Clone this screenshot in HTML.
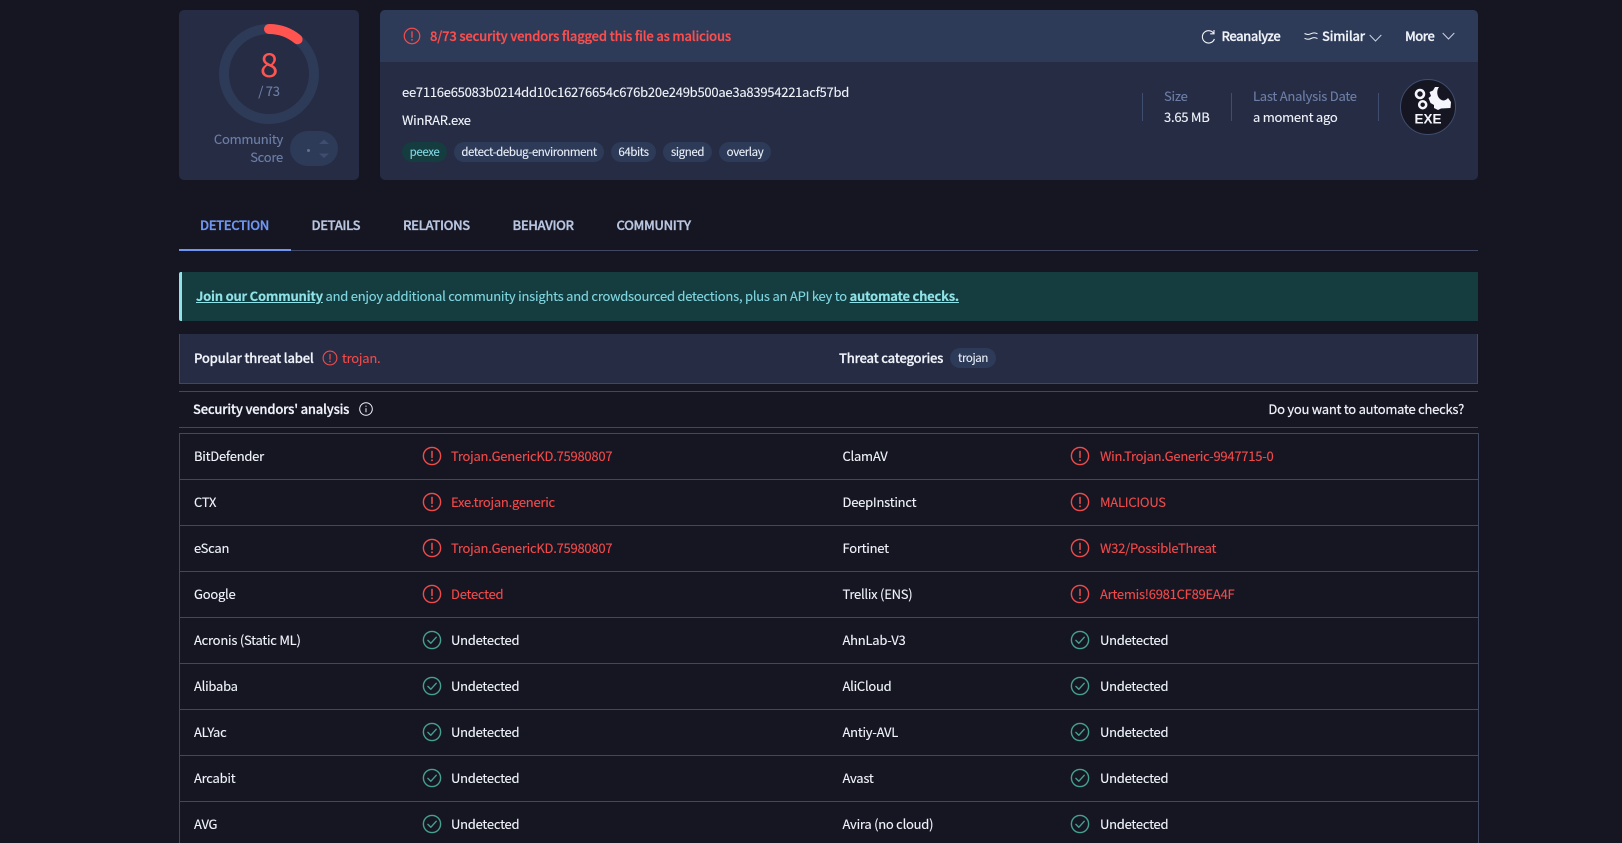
<!DOCTYPE html>
<html lang="en">
<head>
<meta charset="utf-8">
<title>VirusTotal - File</title>
<style>
*{box-sizing:border-box;margin:0;padding:0}
html,body{width:1622px;height:843px;overflow:hidden;background:#161623}
body{position:relative;font-family:"Noto Sans CJK JP","Liberation Sans",sans-serif;font-size:13px;letter-spacing:-.25px;color:#f0f3fa;-webkit-text-stroke:.12px currentColor}
.a{position:absolute}
.t{position:absolute;white-space:nowrap;line-height:20px;transform:translateY(-10px)}
.b{font-weight:500;letter-spacing:-.2px;-webkit-text-stroke:.25px currentColor}
.red{color:#f04a4a}
.lab{color:#6d7fa8}
.tag{position:absolute;top:142px;height:20px;border-radius:10px;background:#2d3b58;font-size:11.5px;letter-spacing:-.4px;line-height:20px;text-align:center;color:#e9eef8;white-space:nowrap}
.hl{position:absolute;background:#3f4763;height:1px}
.r{position:absolute;left:179px;width:1300px;height:46px;border-bottom:1px solid #3f4763}
.r span{position:absolute;top:12px;line-height:20px;white-space:nowrap}
.r svg{position:absolute;top:12px;width:20px;height:20px}
.n1{left:15px}.i1{left:243px}.v1{left:272px}
.n2{left:663.500px}.i2{left:891px}.v2{left:921px}
.tab{position:absolute;top:215px;font-size:13px;letter-spacing:-.35px;font-weight:500;-webkit-text-stroke:.35px currentColor;line-height:20px;color:#b9c6e0;white-space:nowrap}
svg{display:block;overflow:visible}
</style>
</head>
<body>
<svg width="0" height="0" style="position:absolute">
<symbol id="al" viewBox="0 0 20 20"><circle cx="10" cy="10" r="8.600" fill="none" stroke="#ef4b4b" stroke-width="1.400"/><path d="M10 5.400v6" stroke="#ef4b4b" stroke-width="1.500" stroke-linecap="round"/><circle cx="10" cy="14.300" r=".95" fill="#ef4b4b"/></symbol>
<symbol id="ok" viewBox="0 0 20 20"><circle cx="10" cy="10" r="8.600" fill="none" stroke="#45a08f" stroke-width="1.400"/><path d="M5.900 10.400l2.900 2.900 5.400-6" fill="none" stroke="#45a08f" stroke-width="1.400" stroke-linecap="round" stroke-linejoin="round"/></symbol>
</svg>

<!-- score card -->
<div class="a" style="left:179px;top:10px;width:180px;height:170px;background:#252c43;border-radius:5px"></div>
<svg class="a" style="left:209px;top:14px" width="120" height="120" viewBox="0 0 120 120">
<circle cx="60" cy="60" r="45" fill="none" stroke="#2d3b58" stroke-width="10"/>
<path d="M60 15A45 45 0 0 1 88.600 25.300" fill="none" stroke="#ff544f" stroke-width="10" stroke-linecap="round"/>
</svg>
<div class="t" style="left:229px;width:80px;text-align:center;top:63px;font-size:33px;line-height:40px;transform:translateY(-20px);color:#ff544f;font-weight:400;-webkit-text-stroke:0">8</div>
<div class="t lab" style="left:229px;width:80px;text-align:center;top:91px">/ 73</div>
<div class="t lab" style="left:183px;width:100px;text-align:right;top:139px">Community</div>
<div class="t lab" style="left:183px;width:100px;text-align:right;top:157px">Score</div>
<div class="a" style="left:290px;top:131px;width:48px;height:35px;border-radius:18px;background:#2d3b58"></div>
<div class="a" style="left:307px;top:149px;width:3px;height:3px;border-radius:2px;background:#5f6f95"></div>
<svg class="a" style="left:318px;top:139px" width="12" height="20" viewBox="0 0 12 20"><path d="M1 5L6 0.500 11 5zM1 14.500h10L6 19z" fill="#3f4e70"/></svg>

<!-- main card -->
<div class="a" style="left:380px;top:10px;width:1098px;height:170px;background:#252c43;border-radius:5px"></div>
<div class="a" style="left:380px;top:10px;width:1098px;height:52px;background:#2d3b58;border-radius:5px 5px 0 0"></div>
<svg class="a" style="left:403px;top:27px;width:18px;height:18px"><use href="#al"/></svg>
<div class="t b" style="left:430px;top:36px;letter-spacing:-.18px;color:#fb4f4f">8/73 security vendors flagged this file as malicious</div>

<svg class="a" style="left:1201px;top:29px" width="15" height="16" viewBox="0 0 15 16" fill="none" stroke="#f0f3fa" stroke-width="1.100"><path d="M12.600 4.200A6.200 6.200 0 1 0 13.400 10"/><path d="M13 1v3.800H9.200"/></svg>
<div class="t b" style="left:1221.500px;top:36px;letter-spacing:-.45px">Reanalyze</div>
<svg class="a" style="left:1304px;top:31px" width="14" height="10" viewBox="0 0 14 10" fill="none" stroke="#f0f3fa" stroke-width="1"><path d="M.5 2.500C3 3.800 5 3.800 7 2.700S11 1.400 13.500 2.800"/><path d="M.5 7.300C3 8.600 5 8.600 7 7.500S11 6.200 13.500 7.600"/></svg>
<div class="t b" style="left:1322px;top:36px">Similar</div>
<svg class="a" style="left:1369px;top:34px" width="13" height="8" viewBox="0 0 13 8" fill="none" stroke="#c9d2e6" stroke-width="1"><path d="M.7 1l5.800 6 5.800-6"/></svg>
<div class="t b" style="left:1405px;top:36px;letter-spacing:-.5px">More</div>
<svg class="a" style="left:1442px;top:32px" width="13" height="8" viewBox="0 0 13 8" fill="none" stroke="#c9d2e6" stroke-width="1"><path d="M.7 1l5.800 6 5.800-6"/></svg>

<div class="t" style="left:402px;top:92px">ee7116e65083b0214dd10c16276654c676b20e249b500ae3a83954221acf57bd</div>
<div class="t" style="left:402px;top:120px">WinRAR.exe</div>
<div class="tag" style="left:402px;width:45px;background:#153c3f;color:#7fd6e0">peexe</div>
<div class="tag" style="left:454px;width:150px">detect-debug-environment</div>
<div class="tag" style="left:611px;width:45px">64bits</div>
<div class="tag" style="left:663px;width:49px">signed</div>
<div class="tag" style="left:719px;width:52px">overlay</div>

<div class="a" style="left:1142px;top:93px;width:1px;height:28px;background:#3f4d6e"></div>
<div class="a" style="left:1231px;top:93px;width:1px;height:28px;background:#3f4d6e"></div>
<div class="a" style="left:1378px;top:93px;width:1px;height:28px;background:#3f4d6e"></div>
<div class="t lab" style="left:1164px;top:96px">Size</div>
<div class="t" style="left:1164px;top:117px">3.65 MB</div>
<div class="t lab" style="left:1253px;top:96px">Last Analysis Date</div>
<div class="t" style="left:1253px;top:117px">a moment ago</div>

<svg class="a" style="left:1400px;top:79px" width="56" height="56" viewBox="0 0 56 56">
<circle cx="28" cy="28" r="27.500" fill="#161623" stroke="#3f4d6e"/>
<circle cx="20" cy="15" r="4" fill="none" stroke="#f4f6fb" stroke-width="2.600"/>
<circle cx="22.700" cy="25.700" r="3.500" fill="none" stroke="#f4f6fb" stroke-width="2.500"/>
<path d="M35 8L39 8C36.500 11 36.500 17 40 20C43 22.500 46 21.500 48 19L51 23L50.500 29L41 29.500L38 31L34 29L34 26L30.500 24L28.500 19L31 17L29.500 13L33 11.500Z" fill="#f4f6fb"/>
<text x="28" y="44.500" text-anchor="middle" font-family="'Liberation Sans',sans-serif" font-weight="700" font-size="13.500" letter-spacing="0" fill="#f4f6fb">EXE</text>
</svg>

<!-- tabs -->
<div class="tab" style="left:200px;color:#6f96f2">DETECTION</div>
<div class="tab" style="left:311.500px">DETAILS</div>
<div class="tab" style="left:403px">RELATIONS</div>
<div class="tab" style="left:512.500px">BEHAVIOR</div>
<div class="tab" style="left:616.500px">COMMUNITY</div>
<div class="hl" style="left:179px;top:250px;width:1299px"></div>
<div class="a" style="left:179px;top:249px;width:112px;height:2px;background:#6f96f2"></div>

<!-- banner -->
<div class="a" style="left:179px;top:272px;width:1299px;height:49px;background:#153c3f;border-left:3px solid #8fe3e8;border-radius:2px 0 0 2px"></div>
<div class="t" style="left:196px;top:296px;letter-spacing:-.235px;color:#7fd6e0"><b style="font-weight:700;text-decoration:underline;color:#8fe3e8">Join our Community</b> and enjoy additional community insights and crowdsourced detections, plus an API key to <b style="font-weight:700;text-decoration:underline;color:#8fe3e8">automate checks.</b></div>

<!-- threat -->
<div class="a" style="left:179px;top:334px;width:1299px;height:50px;background:#252c43;border:1px solid #3f4763;border-top:0"></div>
<div class="t b" style="left:194px;top:358px">Popular threat label</div>
<svg class="a" style="left:322px;top:350px;width:16px;height:16px"><use href="#al"/></svg>
<div class="t red" style="left:342px;top:358px">trojan.</div>
<div class="t b" style="left:839px;top:358px">Threat categories</div>
<div class="tag" style="left:950px;top:348px;width:46px">trojan</div>

<!-- vendors head -->
<div class="hl" style="left:179px;top:391px;width:1299px"></div>
<div class="t b" style="left:193px;top:409px">Security vendors' analysis</div>
<svg class="a" style="left:359px;top:402px" width="14" height="14" viewBox="0 0 14 14" fill="none" stroke="#f0f3fa" stroke-width="1"><circle cx="7" cy="7" r="6.300"/><path d="M7 6.200v4"/><path d="M7 3.600v1.100"/></svg>
<div class="t" style="right:158px;top:409px;-webkit-text-stroke:.2px currentColor">Do you want to automate checks?</div>
<div class="hl" style="left:179px;top:427px;width:1299px"></div>

<!-- table frame -->
<div class="a" style="left:179px;top:433px;width:1300px;height:420px;border:1px solid #3f4763"></div>

<div class="r" style="top:434px"><span class="n1">BitDefender</span><svg class="i1"><use href="#al"/></svg><span class="v1 red">Trojan.GenericKD.75980807</span><span class="n2">ClamAV</span><svg class="i2"><use href="#al"/></svg><span class="v2 red">Win.Trojan.Generic-9947715-0</span></div>
<div class="r" style="top:480px"><span class="n1">CTX</span><svg class="i1"><use href="#al"/></svg><span class="v1 red">Exe.trojan.generic</span><span class="n2">DeepInstinct</span><svg class="i2"><use href="#al"/></svg><span class="v2 red">MALICIOUS</span></div>
<div class="r" style="top:526px"><span class="n1">eScan</span><svg class="i1"><use href="#al"/></svg><span class="v1 red">Trojan.GenericKD.75980807</span><span class="n2">Fortinet</span><svg class="i2"><use href="#al"/></svg><span class="v2 red">W32/PossibleThreat</span></div>
<div class="r" style="top:572px"><span class="n1">Google</span><svg class="i1"><use href="#al"/></svg><span class="v1 red">Detected</span><span class="n2">Trellix (ENS)</span><svg class="i2"><use href="#al"/></svg><span class="v2 red">Artemis!6981CF89EA4F</span></div>
<div class="r" style="top:618px"><span class="n1">Acronis (Static ML)</span><svg class="i1"><use href="#ok"/></svg><span class="v1">Undetected</span><span class="n2">AhnLab-V3</span><svg class="i2"><use href="#ok"/></svg><span class="v2">Undetected</span></div>
<div class="r" style="top:664px"><span class="n1">Alibaba</span><svg class="i1"><use href="#ok"/></svg><span class="v1">Undetected</span><span class="n2">AliCloud</span><svg class="i2"><use href="#ok"/></svg><span class="v2">Undetected</span></div>
<div class="r" style="top:710px"><span class="n1">ALYac</span><svg class="i1"><use href="#ok"/></svg><span class="v1">Undetected</span><span class="n2">Antiy-AVL</span><svg class="i2"><use href="#ok"/></svg><span class="v2">Undetected</span></div>
<div class="r" style="top:756px"><span class="n1">Arcabit</span><svg class="i1"><use href="#ok"/></svg><span class="v1">Undetected</span><span class="n2">Avast</span><svg class="i2"><use href="#ok"/></svg><span class="v2">Undetected</span></div>
<div class="r" style="top:802px"><span class="n1">AVG</span><svg class="i1"><use href="#ok"/></svg><span class="v1">Undetected</span><span class="n2">Avira (no cloud)</span><svg class="i2"><use href="#ok"/></svg><span class="v2">Undetected</span></div>
</body>
</html>
